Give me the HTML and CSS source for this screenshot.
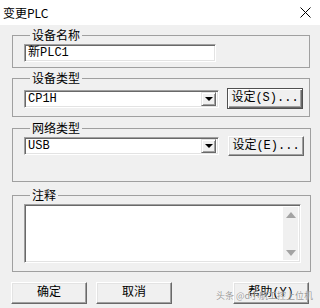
FILE: index.html
```html
<!DOCTYPE html>
<html lang="zh-CN">
<head>
<meta charset="UTF-8">
<title>变更PLC</title>
<link rel="stylesheet" href="styles.css">
</head>
<body>

<div class="dialog">
  <div class="titlebar">
    <span class="title">变更PLC</span>
    <svg class="close" width="11" height="11" viewBox="0 0 11 11">
      <path d="M0.5 0.5 L10.5 10.5 M10.5 0.5 L0.5 10.5" stroke="#000" stroke-width="1" fill="none"/>
    </svg>
  </div>

  <div class="content">
    <fieldset class="group group-name">
      <legend>设备名称</legend>
      <div class="field name-field">新PLC1</div>
    </fieldset>

    <fieldset class="group group-type">
      <legend>设备类型</legend>
      <div class="row">
        <div class="combo">
          <span class="combo-text">CP1H</span>
          <span class="combo-btn"><span class="arrow"></span></span>
        </div>
        <button class="btn btn-default">设定(S)...</button>
      </div>
    </fieldset>

    <fieldset class="group group-net">
      <legend>网络类型</legend>
      <div class="row">
        <div class="combo">
          <span class="combo-text">USB</span>
          <span class="combo-btn"><span class="arrow"></span></span>
        </div>
        <button class="btn btn-set">设定(E)...</button>
      </div>
    </fieldset>

    <fieldset class="group group-note">
      <legend>注释</legend>
      <div class="memo">
        <div class="memo-text"></div>
        <div class="scrollbar">
          <svg width="10" height="6" viewBox="0 0 10 6"><path d="M5 0 L10 6 L0 6 Z" fill="#a3a3a3"/></svg>
          <svg width="10" height="6" viewBox="0 0 10 6"><path d="M0 0 L10 0 L5 6 Z" fill="#a3a3a3"/></svg>
        </div>
      </div>
    </fieldset>

    <div class="actions">
      <button class="btn">确定</button>
      <button class="btn">取消</button>
      <button class="btn btn-help">帮助(Y)</button>
    </div>
  </div>

  <div class="watermark">头条 @d小航工控上位机</div>
</div>

</body>
</html>
```

FILE: styles.css
```css
body {
  margin: 0;
  width: 320px;
  height: 308px;
  overflow: hidden;
  background-color: #f0f0f0;
  font-family: 'Liberation Mono', 'Noto Sans CJK SC', monospace;
  font-size: 12px;
  color: #000;
}
.dialog {
  position: relative;
  width: 320px;
  height: 308px;
  background-color: #f0f0f0;
}
.titlebar {
  height: 25px;
  background-color: #fff;
  display: flex;
  align-items: center;
  justify-content: space-between;
  padding: 0 9px 0 3px;
}
.title {
  font-family: 'Noto Sans CJK SC', sans-serif;
  font-size: 12px;
  line-height: 16px;
}
.close {
  display: block;
}
.content {
  display: flex;
  flex-direction: column;
}
.group {
  box-sizing: border-box;
  width: 298px;
  margin: 0 0 0 12px;
  padding: 0 0 0 11px;
  border: 1px solid #a0a0a0;
  min-inline-size: 0;
}
.group legend {
  margin-left: 6px;
  padding: 0 2px;
  font-family: 'Noto Sans CJK SC', sans-serif;
  line-height: 14px;
  height: 14px;
}
.group-name {
  margin-top: 3px;
  padding-top: 2px;
  padding-bottom: 5px;
}
.group-type {
  margin-top: 3px;
  padding-top: 3px;
  padding-bottom: 7px;
}
.group-net {
  margin-top: 4px;
  padding-top: 1px;
  padding-bottom: 25px;
  width: 299px;
}
.group-note {
  margin-top: 6px;
  padding-top: 2px;
  padding-bottom: 8px;
  width: 299px;
}
.field,
.combo,
.memo {
  box-sizing: border-box;
  background-color: #fff;
  border: 1px solid;
  border-color: #a0a0a0 #fff #fff #a0a0a0;
  box-shadow: inset 1px 1px 0 #696969, inset -1px -1px 0 #e3e3e3;
}
.field {
  width: 192px;
  height: 18px;
  line-height: 16px;
  padding-left: 3px;
}
.row {
  display: flex;
  align-items: center;
}
.combo {
  width: 195px;
  height: 18px;
  display: flex;
  align-items: center;
  justify-content: space-between;
  padding: 2px;
}
.combo-text {
  padding-left: 1px;
  line-height: 14px;
}
.combo-btn {
  box-sizing: border-box;
  width: 15px;
  height: 14px;
  background-color: #f0f0f0;
  border: 1px solid;
  border-color: #e3e3e3 #696969 #696969 #e3e3e3;
  box-shadow: inset 1px 1px 0 #fff, inset -1px -1px 0 #a0a0a0;
  display: flex;
  align-items: center;
  justify-content: center;
}
.arrow {
  width: 0;
  height: 0;
  border-left: 4px solid transparent;
  border-right: 4px solid transparent;
  border-top: 4px solid #000;
}
.btn {
  box-sizing: border-box;
  width: 76px;
  height: 21px;
  padding: 0;
  font-family: 'Liberation Mono', 'Noto Sans CJK SC', monospace;
  font-size: 12px;
  line-height: 17px;
  color: #000;
  background-color: #f0f0f0;
  border: 1px solid;
  border-color: #fff #696969 #696969 #fff;
  box-shadow: inset -1px -1px 0 #a0a0a0, inset 1px 1px 0 #e3e3e3;
  border-radius: 0;
}
.btn-default {
  margin-left: 8px;
  border: 1px solid #505050;
  box-shadow: inset 1px 1px 0 #fff, inset -1px -1px 0 #696969, inset -2px -2px 0 #a0a0a0;
}
.btn-set {
  margin-left: 9px;
  height: 20px;
}
.memo {
  width: 277px;
  height: 59px;
  display: flex;
  padding: 2px;
}
.memo-text {
  flex: 1;
}
.scrollbar {
  width: 15px;
  background-color: #f0f0f0;
  display: flex;
  flex-direction: column;
  align-items: center;
  justify-content: space-between;
  padding: 5px 0 4px;
}
.scrollbar svg {
  display: block;
}
.actions {
  display: flex;
  margin-top: 10px;
  padding: 0 11px;
}
.actions .btn {
  height: 22px;
  margin-right: 9px;
}
.actions .btn-help {
  margin-left: auto;
  margin-right: 0;
}
.watermark {
  position: absolute;
  left: 216px;
  top: 290px;
  font-family: 'Noto Sans CJK SC', sans-serif;
  font-size: 9px;
  line-height: 12px;
  color: rgba(120, 120, 120, 0.75);
  text-shadow: 0 0 1px #fff;
  white-space: nowrap;
}
```
